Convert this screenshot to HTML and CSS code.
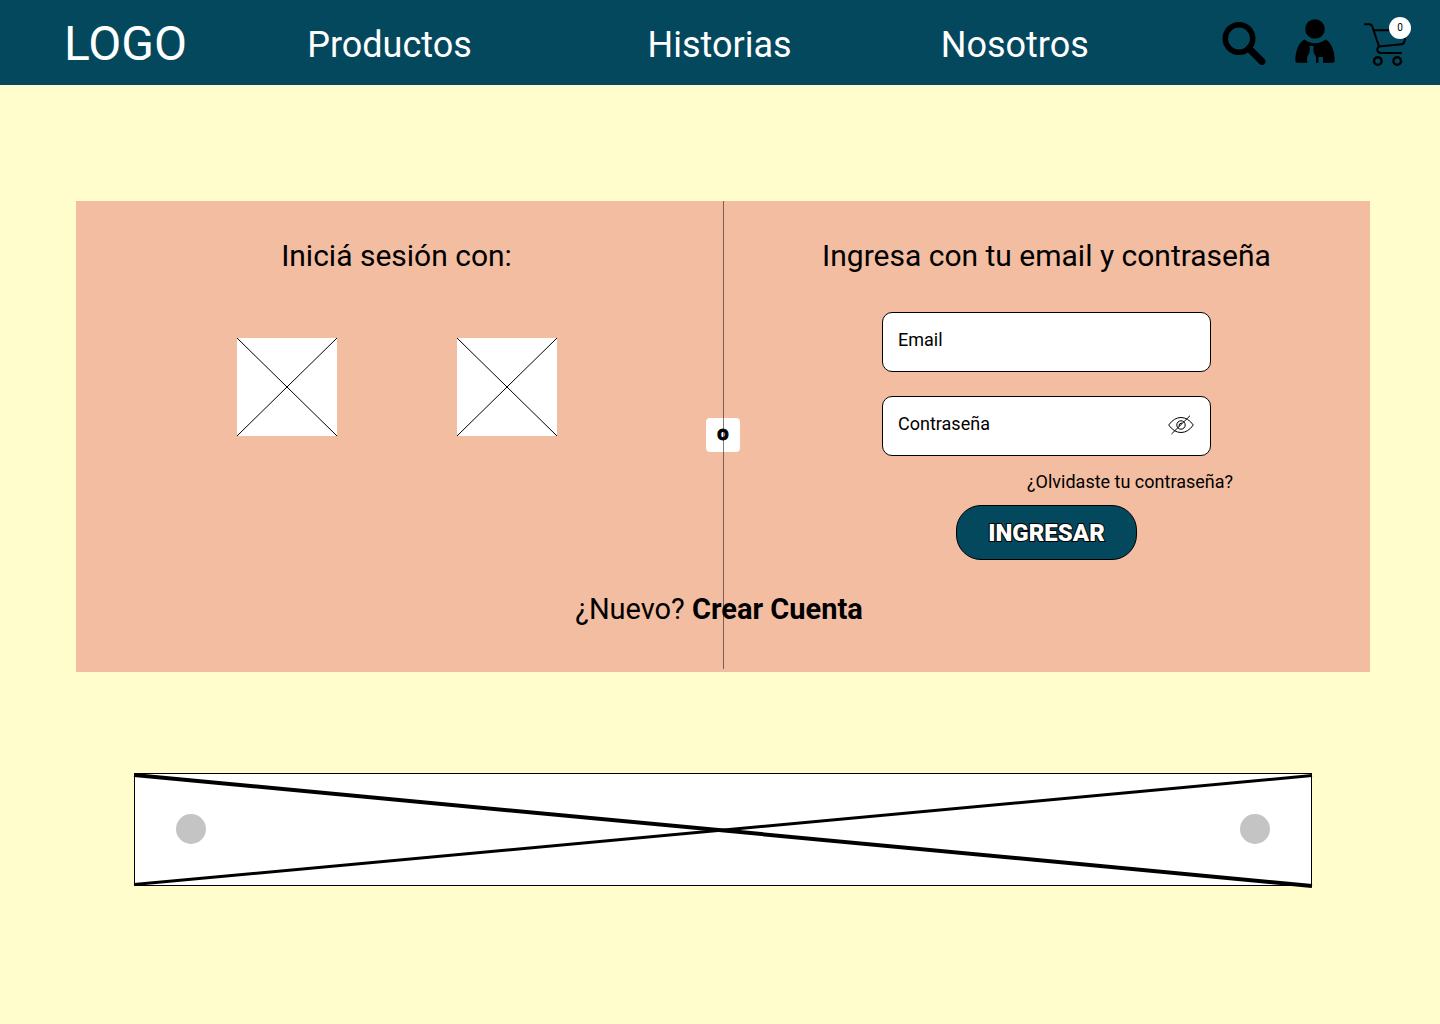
FILE: index.html
```html
<!DOCTYPE html>
<html lang="es">
<head>
<meta charset="utf-8">
<meta name="viewport" content="width=device-width, initial-scale=1">
<title>Iniciar sesión</title>
<link rel="stylesheet" href="styles.css">
</head>
<body>
<header class="header">
  <a class="logo" href="#">LOGO</a>
  <nav class="nav">
    <a href="#">Productos</a>
    <a href="#">Historias</a>
    <a href="#">Nosotros</a>
  </nav>
  <div class="tools">
    <button class="icon-button" type="button" aria-label="Buscar">
      <svg width="44" height="46" viewBox="0 0 44 46" fill="none" stroke="#000" stroke-linecap="round">
        <circle cx="17" cy="19.500" r="13.700" stroke-width="5.600"/>
        <path d="M27 29.500 40 42.500" stroke-width="7"/>
      </svg>
    </button>
    <button class="icon-button" type="button" aria-label="Mi cuenta">
      <svg width="40" height="46" viewBox="0 0 40 46">
        <circle cx="20" cy="10" r="9.800"/>
        <path d="M9.500 20.500C13 23 16 24.300 20 24.300S27 23 30.500 20.500C36.500 23 39.700 33 39.700 41.500Q39.700 43.700 37.500 43.700H28V38H23.500V43.700H21V38L18.700 33.500 18.300 29.500 18.700 27H14.200L15 29.500 14.500 33.500 12.200 38V43.700H2.500Q.3 43.700.3 41.500C.3 33 3.500 23 9.500 20.500Z"/>
      </svg>
    </button>
    <button class="icon-button cart" type="button" aria-label="Carrito">
      <svg width="46" height="50" viewBox="0 0 46 50" fill="none" stroke="#000" stroke-width="2" stroke-linecap="round" stroke-linejoin="round">
        <path d="M1 7.300H5.500Q7.500 7.300 8.500 10L15 29.500 37.500 27.200Q40 27 40.500 24L42 17M10 13.300H28M15 29.500Q12.500 31.500 13.500 34 14.500 36 17 36H37"/>
        <circle cx="13.800" cy="44" r="3.800" stroke-width="2.400"/>
        <circle cx="33.200" cy="44" r="3.800" stroke-width="2.400"/>
      </svg>
      <span class="badge">0</span>
    </button>
  </div>
</header>

<main class="main">
  <section class="card">
    <div class="column social">
      <h2>Iniciá sesión con:</h2>
      <div class="providers">
        <button class="provider" type="button" aria-label="Primer proveedor">
          <svg viewBox="0 0 100 98"><path d="M0 0 100 98M100 0 0 98"/></svg>
        </button>
        <button class="provider" type="button" aria-label="Segundo proveedor">
          <svg viewBox="0 0 100 98"><path d="M0 0 100 98M100 0 0 98"/></svg>
        </button>
      </div>
    </div>
    <form class="column login">
      <h2>Ingresa con tu email y contraseña</h2>
      <div class="field">
        <input type="email" placeholder="Email" aria-label="Email">
      </div>
      <div class="field">
        <input type="password" placeholder="Contraseña" aria-label="Contraseña">
        <button class="reveal" type="button" aria-label="Mostrar contraseña">
          <svg width="26" height="20" viewBox="0 0 26 20" fill="none" stroke="#000">
            <path d="M.7 10Q6 2.500 13 2.500T25.300 10Q20 17.500 13 17.500T.7 10ZM3.500 19 22 .7"/>
            <circle cx="13" cy="10" r="4.200"/>
            <path d="M11 11.500Q10.500 8 14 8"/>
          </svg>
        </button>
      </div>
      <a class="forgot" href="#">¿Olvidaste tu contraseña?</a>
      <button class="submit" type="submit">INGRESAR</button>
    </form>
    <p class="signup">¿Nuevo? <a href="#">Crear Cuenta</a></p>
    <span class="or">o</span>
    <span class="divider"></span>
  </section>

  <section class="carousel" aria-label="Destacados">
    <svg class="cross" viewBox="0 0 1178 113" preserveAspectRatio="none">
      <path d="M0 111.500 1178 2.500" stroke-width="3"/>
      <path d="M0 2 1178 113" stroke-width="4"/>
    </svg>
    <button class="dot" type="button" aria-label="Anterior"></button>
    <button class="dot" type="button" aria-label="Siguiente"></button>
  </section>
</main>
</body>
</html>
```
FILE: styles.css
```css
* {
  box-sizing: border-box;
}

body {
  margin: 0;
  min-height: 100vh;
  background: #fffdcc;
  color: #000;
  font-family: Roboto, "Liberation Sans", sans-serif;
  font-size: 18px;
}

a {
  color: inherit;
  text-decoration: none;
}

button,
input {
  font: inherit;
  color: inherit;
}

button {
  padding: 0;
  border: 0;
  background: none;
  cursor: pointer;
}

svg {
  display: block;
}

/* Header */
.header {
  display: grid;
  grid-template-columns: 243fr 914fr auto;
  align-items: center;
  height: 85px;
  padding: 0 30px 0 64px;
  background: #04485e;
  color: #fff;
}

.logo {
  padding-top: 2px;
  font-size: 48px;
  line-height: 56px;
}

.nav {
  display: grid;
  grid-template-columns: 340fr 293fr 281fr;
  padding-top: 4px;
  font-size: 36px;
  line-height: 42px;
}

.tools {
  display: flex;
  align-items: center;
  gap: 29px;
  padding-bottom: 1px;
}

.cart {
  position: relative;
}

.badge {
  position: absolute;
  top: 0;
  right: -1px;
  width: 22px;
  height: 22px;
  border-radius: 50%;
  background: #fff;
  color: #000;
  font-size: 10px;
  line-height: 22px;
}

/* Login card */
.main {
  padding: 116px 70px 116px 76px;
}

.card {
  position: relative;
  display: grid;
  grid-template-columns: 1fr 1fr;
  padding: 37px 0 45px;
  background: #f3bda2;
}

.column {
  display: flex;
  flex-direction: column;
  align-items: center;
}

.social {
  padding-right: 6px;
}

h2 {
  margin: 0 0 38px;
  font-size: 30px;
  font-weight: 400;
  line-height: 36px;
}

.providers {
  display: flex;
  gap: 120px;
  padding-top: 26px;
}

.provider {
  width: 100px;
  height: 98px;
  background: #fff;
}

.provider svg {
  overflow: visible;
  stroke: #000;
}

.field {
  position: relative;
  width: 329px;
  margin-bottom: 24px;
}

.field input {
  display: block;
  width: 100%;
  height: 60px;
  padding: 0 48px 6px 15px;
  border: 1px solid #000;
  border-radius: 10px;
  background: #fff;
}

.field input::placeholder {
  color: #000;
  opacity: 1;
}

.reveal {
  position: absolute;
  top: 19px;
  right: 17px;
}

.forgot {
  align-self: flex-end;
  margin: -10px 137px 11px 0;
  line-height: 24px;
}

.submit {
  width: 181px;
  height: 55px;
  border: 1px solid #000;
  border-radius: 25px;
  background: #04485e;
  color: #fff;
  font-size: 24px;
  font-weight: 900;
  -webkit-text-stroke: 2px #000;
  paint-order: stroke fill;
}

.signup {
  grid-column: 1 / -1;
  margin: 31px 8px 0 0;
  font-size: 29px;
  line-height: 36px;
  text-align: center;
}

.signup a {
  font-weight: 700;
}

.or {
  position: absolute;
  top: 217px;
  left: calc(50% - 17px);
  width: 34px;
  height: 34px;
  border-radius: 4px;
  background: #fff;
  font-size: 20px;
  font-weight: 700;
  line-height: 30px;
  text-align: center;
  -webkit-text-stroke: 1px #000;
}

.divider {
  position: absolute;
  top: 0;
  bottom: 3px;
  left: 50%;
  width: 1px;
  background: rgba(0, 0, 0, 0.5);
}

/* Carousel */
.carousel {
  position: relative;
  display: flex;
  align-items: center;
  justify-content: space-between;
  height: 113px;
  margin: 101px 58px 0;
  padding: 0 41px 2px;
  border: 1px solid #000;
  background: #fff;
}

.cross {
  position: absolute;
  top: -1px;
  left: -1px;
  width: calc(100% + 2px);
  height: 113px;
  overflow: visible;
  stroke: #000;
}

.dot {
  position: relative;
  width: 30px;
  height: 30px;
  border-radius: 50%;
  background: #c4c4c4;
}
```
